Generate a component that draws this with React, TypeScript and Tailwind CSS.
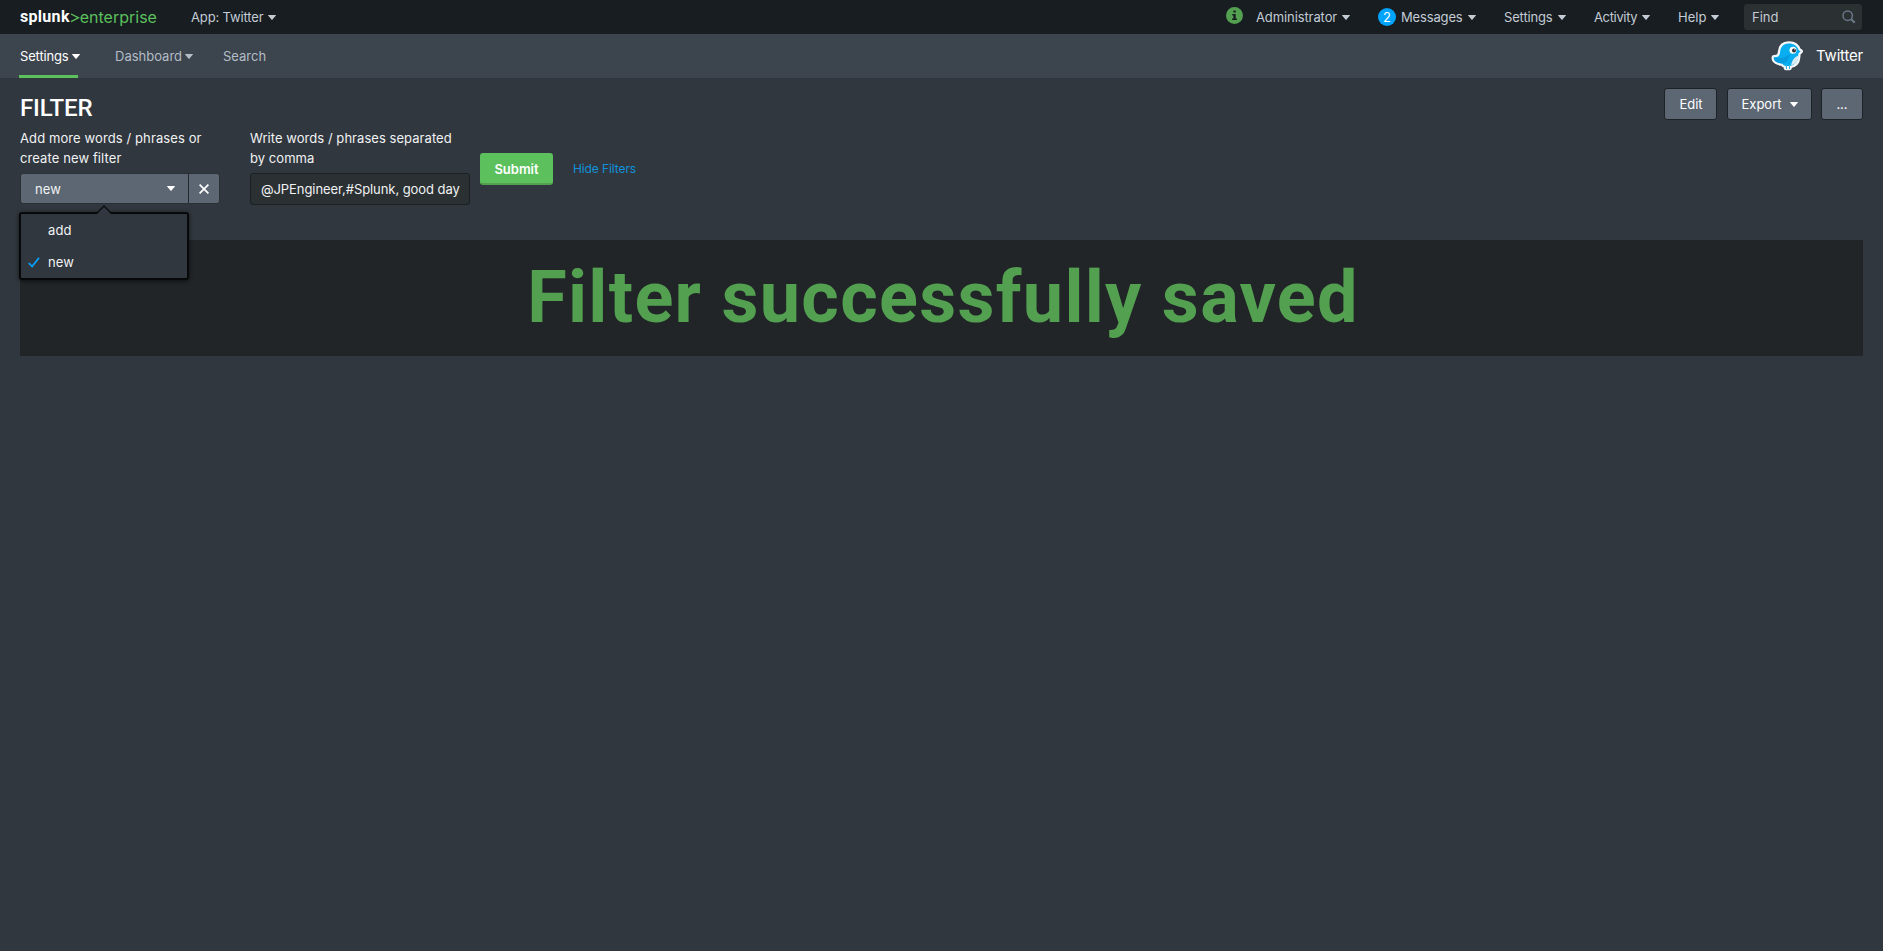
import React from "react";

function Caret({ className = "" }: { className?: string }) {
  return (
    <svg className={`shrink-0 ${className}`} width="8" height="5" viewBox="0 0 8 5" fill="currentColor">
      <path d="M0.3 0h7.4a.3.3 0 0 1 .2.5L4.3 4.8a.4.4 0 0 1-.6 0L.1.5A.3.3 0 0 1 .3 0z" />
    </svg>
  );
}

function Bird() {
  const outline =
    "M17.5 4.5c-4.6.2-7.7 3-8.2 7.4-.2 2.2-.6 3.8-1.6 5.1-1.2 1.2-3 1.3-4.8 1.3-.6 4.2 4.2 6 8.3 6.2.9 1.4 2.3 2.3 3.6 2.5l.1 2h3.6l.2-2c5-.8 8.1-4.2 8.4-9 .1-1.2.1-2.5.4-3.7l2.1-1.9-2-1.4C26.3 7 22.5 4.3 17.5 4.5z";
  return (
    <svg width="34" height="34" viewBox="0 0 34 34">
      <path d={outline} fill="#f4f6f7" stroke="#f4f6f7" strokeWidth="4.6" strokeLinejoin="round" />
      <path d={outline} fill="#08aef0" />
      <path d="M14.5 27h4.5v2.5h-4.5z" fill="#f4f6f7" />
      <path d="M2.9 18.3c5.3 2.2 11 .5 16-3.3-.5 5-3.3 8.2-7.7 9.5-4.1-.2-8.9-2-8.3-6.2z" fill="#079be0" />
      <path d="M27.3 16.5c-3.9 1.5-6.5 5-7.2 9.8 4.3-1 6.900-4 7.200-8.300z" fill="#d9eaf3" />
      <path d="M15.5 26v4M18.5 26v4" stroke="#3ab4e8" strokeWidth="1" />
      <circle cx="22" cy="11.3" r="3.5" fill="#fff" />
      <circle cx="23" cy="11.4" r="2" fill="#27282c" />
      <circle cx="23.6" cy="10.7" r=".5" fill="#fff" />
    </svg>
  );
}

function TopBar() {
  return (
    <header className="flex h-[34px] items-center bg-[#171d21] pl-5 pr-[21px] text-[13px] leading-[34px] text-[#c3cbd4]">
      <div className="flex w-[171px] items-center text-[16px]">
        <span className="font-[Roboto] font-bold tracking-[0.3px] text-white">splunk</span>
        <svg className="mt-[2px]" width="10" height="10" viewBox="0 0 10 10" fill="none" stroke="#5cc05c" strokeWidth="1.4">
          <path d="M1 1l7.5 3.8L1 8.7" />
        </svg>
        <span className="text-[#5cc05c]">enterprise</span>
      </div>
      <div className="flex items-center">
        <span className="tracking-[-0.15px]">App: Twitter</span>
        <Caret className="ml-[5px]" />
      </div>
      <div className="ml-auto flex h-full items-center">
        <svg className="mb-[3px] mr-[13px]" width="17" height="17" viewBox="0 0 17 17">
          <circle cx="8.5" cy="8.5" r="8.5" fill="#53a051" />
          <path d="M7.4 3.4h2.3v2.1H7.4zM6.3 6.9h3.4v4.7h1.2v1.5H6.1v-1.5h1.3V8.4H6.3z" fill="#171d21" />
        </svg>
        <div className="flex w-[122px] items-center">
          <span className="tracking-[-0.1px]">Administrator</span>
          <Caret className="ml-[5px]" />
        </div>
        <div className="flex w-[126px] items-center">
          <span className="mr-[5px] flex h-[18px] w-[18px] items-center justify-center rounded-full bg-[#00a4fd] text-[13px] leading-none text-white">
            2
          </span>
          <span className="tracking-[-0.15px]">Messages</span>
          <Caret className="ml-[5px]" />
        </div>
        <div className="flex w-[90px] items-center">
          <span className="tracking-[-0.15px]">Settings</span>
          <Caret className="ml-[5px]" />
        </div>
        <div className="flex w-[84px] items-center">
          <span className="tracking-[-0.35px]">Activity</span>
          <Caret className="ml-[5px]" />
        </div>
        <div className="flex w-[66px] items-center">
          <span>Help</span>
          <Caret className="ml-[5px]" />
        </div>
        <div className="flex h-[26px] w-[118px] items-center justify-between rounded-[3px] bg-[#2b3033] pl-[8px] pr-[6px]">
          <span>Find</span>
          <svg width="14" height="14" viewBox="0 0 14 14" fill="none" stroke="#6b7785">
            <circle cx="5.7" cy="5.7" r="4.7" strokeWidth="1.5" />
            <path d="M9.2 9.2l3.5 3.5" strokeWidth="2.2" />
          </svg>
        </div>
      </div>
    </header>
  );
}

function AppNav() {
  return (
    <nav className="flex h-[44px] bg-[#3c444d] pl-[19px] pr-5 text-[13px] leading-[44px] text-[#b3bdc7]">
      <div className="flex h-full w-[59px] items-center border-b-[3px] border-[#5cc05c] pl-[1px] pt-[3px] text-white">
        <span className="tracking-[-0.15px]">Settings</span>
        <Caret className="ml-[3px]" />
      </div>
      <div className="ml-[37px] flex w-[108px] items-center">
        <span>Dashboard</span>
        <Caret className="ml-[3px]" />
      </div>
      <span>Search</span>
      <div className="ml-auto flex items-center text-[15px] text-white">
        <Bird />
        <span className="ml-[11px] tracking-[-0.2px]">Twitter</span>
      </div>
    </nav>
  );
}

const headerButton =
  "flex h-[32px] items-center justify-center rounded-[3px] border border-[#1d2226] bg-[#5c6773] pt-[1px] text-[13px] text-white";

function PageHeader() {
  return (
    <div className="flex h-[50px] justify-between px-5">
      <h1 className="pt-[14px] font-[Roboto] text-[24px] font-medium leading-[32px] tracking-[-0.15px] text-white">FILTER</h1>
      <div className="flex pt-[10px]">
        <button className={`${headerButton} w-[53px] pl-px`}>Edit</button>
        <button className={`${headerButton} ml-[10px] w-[85px]`}>
          Export
          <Caret className="ml-[8px]" />
        </button>
        <button className={`${headerButton} ml-[9px] w-[42px]`}>...</button>
      </div>
    </div>
  );
}

function Dropdown() {
  return (
    <div className="absolute left-[-2px] top-[38px] z-10 w-[170px] rounded-[3px] border-2 border-[#070809] bg-[#31373e] shadow-[0_1px_4px_rgba(0,0,0,0.6)]">
      <svg className="absolute left-[75px] top-[-9px]" width="16" height="10" viewBox="0 0 16 10">
        <path d="M0.5 9.5L8 1.5l7.5 8z" fill="#31373e" />
        <path d="M0.5 8.5L8 1l7.5 7.500" fill="none" stroke="#0b0d0e" strokeWidth="1.3" />
      </svg>
      <div className="flex h-[32px] items-center pl-[27px]">add</div>
      <div className="flex h-[32px] items-center pl-[7px]">
        <svg className="mr-[8px]" width="12" height="11" viewBox="0 0 12 11" fill="none" stroke="#00a4fd" strokeWidth="1.8">
          <path d="M0.8 6l3.3 3.5L11 0.8" />
        </svg>
        new
      </div>
    </div>
  );
}

function Filters() {
  return (
    <section className="flex h-[112px] pl-5 text-[13px] leading-[20px] text-[#f0f2f4]">
      <div className="w-[230px] tracking-[0.1px]">
        <p>
          Add more words / phrases or
          <br />
          create new filter
        </p>
        <div className="relative mt-[5px] flex h-[31px] w-[200px] rounded-[3px] border border-[#2a3036] bg-[#5c6773]">
          <div className="flex w-[168px] items-center justify-between border-r border-[#23292e] pl-[14px] pr-[13px]">
            <span>new</span>
            <Caret className="text-white" />
          </div>
          <div className="flex flex-1 items-center justify-center">
            <svg width="10" height="10" viewBox="0 0 10 10" stroke="#fff" strokeWidth="1.7">
              <path d="M0.6 0.6l8.8 8.8M9.4 0.6L0.6 9.4" />
            </svg>
          </div>
          <Dropdown />
        </div>
      </div>
      <div className="w-[230px]">
        <p className="tracking-[0.05px]">
          Write words / phrases separated
          <br />
          by comma
        </p>
        <div className="mt-[5px] flex h-[32px] w-[220px] items-center whitespace-nowrap rounded-[3px] border border-[#1b1f22] bg-[#2b3033] pl-[10px] tracking-[-0.07px]">
          @JPEngineer,#Splunk, good day
        </div>
      </div>
      <div className="flex h-[32px] w-[93px] pt-[25px]">
        <button className="h-[32px] w-[73px] rounded-[3px] border-b-2 border-[#53a051] bg-[#5cc05c] pt-px text-[13px] font-semibold leading-[30px] text-white">
          Submit
        </button>
      </div>
      <span className="pt-[31px] text-[12px] tracking-[-0.1px] text-[#1093dc]">Hide Filters</span>
    </section>
  );
}

export default function App() {
  return (
    <div className="min-h-[951px] bg-[#31373e] font-[Inter,sans-serif]">
      <TopBar />
      <AppNav />
      <PageHeader />
      <Filters />
      <main className="mx-5 flex h-[116px] justify-center bg-[#212527]">
        <p className="pl-[3px] pt-[12px] font-[Roboto] text-[72px] font-bold leading-[92px] tracking-[1.3px] text-[#53a051]">
          Filter successfully saved
        </p>
      </main>
    </div>
  );
}
